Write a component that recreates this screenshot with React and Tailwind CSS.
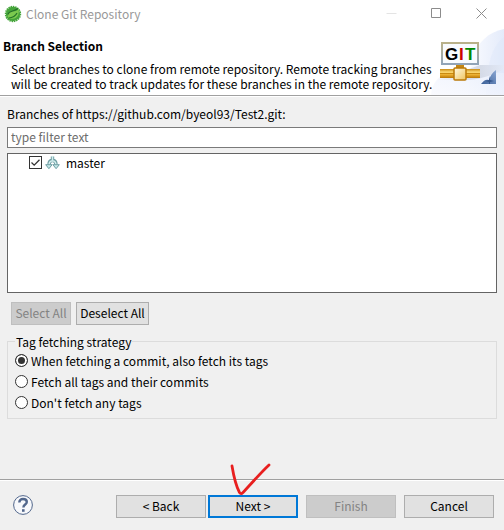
import {useState} from "react";


const buttonBase = "h-[23px] border pb-[2px] text-center leading-[19px] whitespace-nowrap";
const buttonEnabled = "border-[#adadad] bg-[#e1e1e1] text-black";
const buttonDisabled = "border-[#bfbfbf] bg-[#cccccc] text-[#838383]";

const strategies = [
    {id: "auto", label: "When fetching a commit, also fetch its tags"},
    {id: "all", label: "Fetch all tags and their commits"},
    {id: "none", label: "Don't fetch any tags"},
];

function SpringIcon() {
    return (
        <svg width="18" height="18" viewBox="0 0 18 18" aria-hidden="true">
            <circle cx="9" cy="9" r="7.2" fill="#45a53a" />
            <circle cx="9" cy="9" r="7.4" fill="none" stroke="#45a53a" strokeWidth="1.6" strokeDasharray="1.5 0.8" />
            <path d="M4 12.8C2.8 8.500 5.500 6.500 9 6.300c3 0 4.300-.8 5.500-2.600C15.500 8.500 14 13.500 8.500 13.800c-2 0-3.300-.3-4.500-1z" fill="#7bc94e" />
            <path d="M4.500 13c4-.3 7-1.800 8.500-5" fill="none" stroke="#23752a" strokeWidth="1.2" />
            <path d="M3.800 9.500C5 5.500 10 6.800 13.800 3.500" fill="none" stroke="#256f2a" strokeWidth="1.1" />
        </svg>
    );
}

function GitBanner() {
    return (
        <svg width="74" height="68" viewBox="0 0 74 68" className="shrink-0" aria-hidden="true">
            <defs>
                <linearGradient id="swoosh" x1="0" y1="0" x2="1" y2="0">
                    <stop offset="0" stopColor="#fafbff" />
                    <stop offset="1" stopColor="#dde6f9" />
                </linearGradient>
                <linearGradient id="blob" x1="0" y1="1" x2="1" y2="0">
                    <stop offset="0" stopColor="#f8f9fe" />
                    <stop offset="1" stopColor="#e9effc" />
                </linearGradient>
                <linearGradient id="pipe" x1="0" y1="0" x2="0" y2="1">
                    <stop offset="0" stopColor="#c98a12" />
                    <stop offset="0.35" stopColor="#fbd975" />
                    <stop offset="0.65" stopColor="#e9ab2a" />
                    <stop offset="1" stopColor="#b87708" />
                </linearGradient>
                <linearGradient id="knob" x1="0" y1="0" x2="1" y2="1">
                    <stop offset="0" stopColor="#fffbe6" />
                    <stop offset="1" stopColor="#efc35c" />
                </linearGradient>
                <linearGradient id="frame" x1="0" y1="0" x2="0" y2="1">
                    <stop offset="0" stopColor="#b9b18a" />
                    <stop offset="1" stopColor="#91a4b8" />
                </linearGradient>
                <linearGradient id="corner" x1="0" y1="1" x2="1" y2="0">
                    <stop offset="0" stopColor="#3a5f98" />
                    <stop offset="1" stopColor="#8ba7d3" />
                </linearGradient>
                <linearGradient id="shade" x1="0" y1="0" x2="1" y2="0">
                    <stop offset="0" stopColor="#d8dce6" stopOpacity="0.2" />
                    <stop offset="0.6" stopColor="#ccd2df" />
                    <stop offset="1" stopColor="#e3e9f6" />
                </linearGradient>
            </defs>
            <path d="M74 2C58 5 47 16 42 32l-4 36h36z" fill="url(#swoosh)" opacity="0.8" />
            <path d="M74 10C63 18 57 34 56 68h18z" fill="#dbe5fa" opacity="0.4" />
            <path d="M1 68c1-11 6-18 16-22h57v22z" fill="url(#blob)" opacity="0.8" />
            <path d="M8 53L50 38h24v4c-8 5-20 9-34 11z" fill="url(#shade)" opacity="0.8" />
            <rect x="12" y="16" width="36" height="21" fill="#f8fbff" stroke="url(#frame)" strokeWidth="2" />
            <g fontFamily="Liberation Sans, sans-serif" fontSize="17" fontWeight="700">
                <text x="15" y="33" fill="#000000">G</text>
                <text x="29" y="33" fill="#cc0000">I</text>
                <text x="35" y="33" fill="#008800">T</text>
            </g>
            <rect x="26" y="38" width="8" height="4" fill="#c48612" />
            <rect x="10" y="42" width="40" height="9" fill="url(#pipe)" />
            <path d="M10 46.500h40" stroke="#c98a12" />
            <rect x="24" y="41" width="12" height="12" rx="1" fill="url(#knob)" stroke="#bb7a0a" strokeWidth="1.500" />
            <path d="M66 43v14H51c3-4 5-5 8-4 1-4 3-7 7-10z" fill="url(#corner)" />
            <path d="M59 49l1 4 4 1-4 1v2h-1v-2l-4-1 4-1z" fill="#34568c" />
        </svg>
    );
}

function BranchesIcon() {
    return (
        <svg width="15" height="14" viewBox="0 0 15 14" aria-hidden="true" fill="none" stroke="#6f9ea3" strokeWidth="1">
            <path d="M7.500 0.500v4M4 8.500c0-3 1-4 3.500-4.300C10 4.500 11 5.500 11 8.500" stroke="#6f9ea3" strokeWidth="3.400" />
            <path d="M7.500 0v4M4 9c0-3 1-4 3.500-4.300C10 5 11 6 11 9" stroke="#d3eeee" strokeWidth="1.400" />
            <path d="M0.700 8.700h6.400L3.900 12.700zM7.900 8.700h6.400L11.100 12.700z" fill="#c4e8e8" strokeLinejoin="round" />
        </svg>
    );
}

function HelpIcon() {
    return (
        <svg width="20" height="20" viewBox="0 0 20 20" aria-hidden="true" fill="none" stroke="#52678c">
            <circle cx="10" cy="10" r="9.400" fill="#f7f8fb" strokeWidth="1" />
            <path d="M6.300 7.400c0-2.300 1.600-3.400 3.700-3.400 2.200 0 3.800 1.200 3.800 3 0 2.500-3.400 2.600-3.400 5.400" strokeWidth="2.400" />
            <path d="M9 15.500h2.600" strokeWidth="2.600" />
        </svg>
    );
}

function TitleBar() {
    return (
        <div className="flex h-[27px] items-center bg-white pl-1">
            <SpringIcon />
            <span className="ml-1 text-[#999999]">Clone Git Repository</span>
            <div className="ml-auto flex">
                <button type="button" aria-label="Minimize" className="flex h-[27px] w-[45px] items-center justify-center">
                    <svg width="11" height="11" viewBox="0 0 11 11" stroke="#e4e4e4"><path d="M0.500 5.500h10" /></svg>
                </button>
                <button type="button" aria-label="Maximize" className="flex h-[27px] w-[45px] items-center justify-center">
                    <svg width="11" height="11" viewBox="0 0 11 11" fill="none" stroke="#8c8c8c"><path d="M0.500 0.500h9v9h-9z" /></svg>
                </button>
                <button type="button" aria-label="Close" className="flex h-[27px] w-[45px] items-center justify-center">
                    <svg width="11" height="11" viewBox="0 0 11 11" stroke="#8c8c8c"><path d="M0.500 0.500l10 10M10.500 0.500l-10 10" /></svg>
                </button>
            </div>
        </div>
    );
}

export default function App() {
    const [filter, setFilter] = useState("");
    const [checked, setChecked] = useState(true);
    const [strategy, setStrategy] = useState("auto");

    return (
        <div className="flex min-h-screen flex-col bg-[#f0f0f0] font-['Noto_Sans_CJK_KR',sans-serif] text-[12px] leading-[15px] text-black">
            <TitleBar />

            <header className="flex justify-between border-b border-[#a0a0a0] bg-white">
                <div className="min-w-0 flex-1 pt-[11px] pl-[3px]">
                    <h1 className="font-bold">Branch Selection</h1>
                    <p className="mt-2 pl-2 whitespace-nowrap">
                        Select branches to clone from remote repository. Remote tracking branches<br />
                        will be created to track updates for these branches in the remote repository.
                    </p>
                </div>
                <GitBanner />
            </header>

            <main className="flex flex-1 flex-col border-t border-white px-[7px] pt-[9px]">
                <label htmlFor="filter">Branches of https://github.com/byeol93/Test2.git:</label>
                <input
                    id="filter"
                    type="text"
                    placeholder="type filter text"
                    value={filter}
                    onChange={(e) => setFilter(e.target.value)}
                    className="mt-[6px] h-[21px] border border-[#7a7a7a] bg-white px-[3px] pb-[2px] placeholder:text-[#6d6d6d]"
                />

                <div className="mt-[5px] h-[140px] border border-[#646464] bg-white pt-px pl-[21px]">
                    <label className="flex items-center">
                        <input
                            type="checkbox"
                            checked={checked}
                            onChange={(e) => setChecked(e.target.checked)}
                            className="peer sr-only"
                        />
                        <svg width="13" height="13" viewBox="0 0 13 13" fill="none" stroke="#333333" className="[&>path]:invisible peer-checked:[&>path]:visible">
                            <rect x="0.500" y="0.500" width="12" height="12" fill="#ffffff" />
                            <path d="M2.500 6.500l2.700 2.700 5.300-5.400" strokeWidth="1.300" />
                        </svg>
                        <span className="ml-[3px]"><BranchesIcon /></span>
                        <span className="ml-[6px]">master</span>
                    </label>
                </div>

                <div className="mt-[9px] flex gap-[5px] pl-1">
                    <button type="button" disabled={checked} className={`${buttonBase} w-[60px] ${checked ? buttonDisabled : buttonEnabled}`} onClick={() => setChecked(true)}>Select All</button>
                    <button type="button" className={`${buttonBase} ${buttonEnabled} w-[73px]`} onClick={() => setChecked(false)}>Deselect All</button>
                </div>

                <fieldset className="mt-[9px] border border-[#dcdcdc] px-[7px] pt-px pb-[5px]">
                    <legend className="px-px">Tag fetching strategy</legend>
                    {strategies.map((item) => (
                        <label key={item.id} className="flex h-[21px] items-center gap-[3px]">
                            <input
                                type="radio"
                                name="strategy"
                                checked={strategy === item.id}
                                onChange={() => setStrategy(item.id)}
                                className="size-[13px] appearance-none rounded-full border border-[#333333] bg-white checked:bg-[#333333] checked:shadow-[inset_0_0_0_2px_white]"
                            />
                            {item.label}
                        </label>
                    ))}
                </fieldset>
            </main>

            <footer className="flex items-center border-t border-[#a0a0a0] pt-[15px] pr-[10px] pb-3 pl-[13px] shadow-[inset_0_1px_0_white]">
                <button type="button" aria-label="Help" className="-mt-1"><HelpIcon /></button>
                <div className="ml-auto flex gap-2">
                    <div className="flex gap-[2px]">
                        <button type="button" className={`${buttonBase} ${buttonEnabled} w-[90px]`}>&lt; Back</button>
                        <div className="relative">
                            <button type="button" className="h-[23px] w-[90px] border-2 border-[#0078d7] bg-[#e1e1e1] pb-[2px] leading-[17px]">Next &gt;</button>
                            <svg width="42" height="34" viewBox="0 0 42 34" className="pointer-events-none absolute -top-8 left-[22px]" fill="none" stroke="#e81f1f" strokeWidth="2.800" strokeLinecap="round" strokeLinejoin="round" aria-hidden="true">
                                <path d="M2 3c1.500 9 4 20 7.500 26.500 1 1.500 2 1.500 3.500 0C21 21 29 11.500 39 2" />
                            </svg>
                        </div>
                    </div>
                    <button type="button" disabled className={`${buttonBase} ${buttonDisabled} w-[90px]`}>Finish</button>
                    <button type="button" className={`${buttonBase} ${buttonEnabled} w-[90px]`}>Cancel</button>
                </div>
            </footer>
        </div>
    );
}
